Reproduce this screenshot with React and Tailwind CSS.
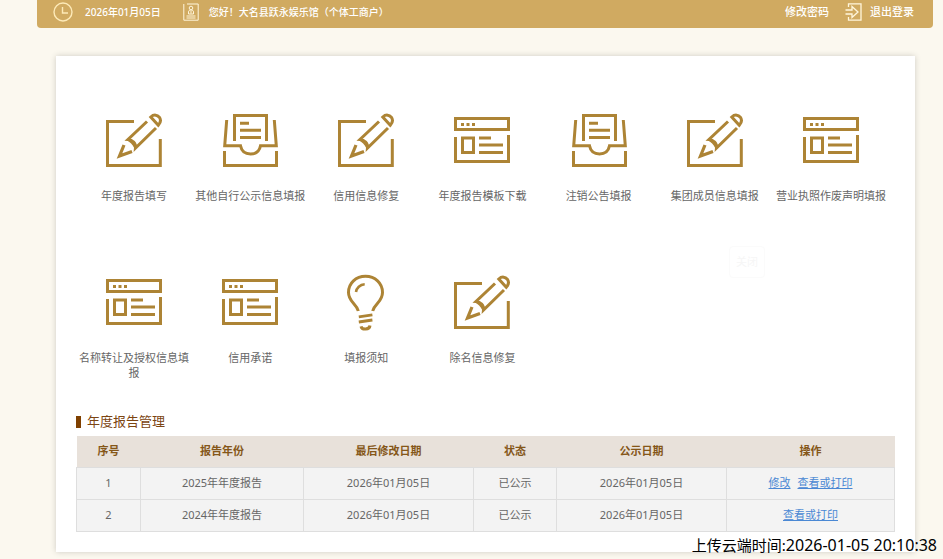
import React from "react";

const menu = [
  { label: "年度报告填写", icon: EditIcon },
  { label: "其他自行公示信息填报", icon: InboxIcon },
  { label: "信用信息修复", icon: EditIcon },
  { label: "年度报告模板下载", icon: WindowIcon },
  { label: "注销公告填报", icon: InboxIcon },
  { label: "集团成员信息填报", icon: EditIcon },
  { label: "营业执照作废声明填报", icon: WindowIcon },
  { label: "名称转让及授权信息填报", icon: WindowIcon },
  { label: "信用承诺", icon: WindowIcon },
  { label: "填报须知", icon: BulbIcon },
  { label: "除名信息修复", icon: EditIcon },
];

// widths are shares of the full table, the browser scales them together
const columns = [
  { title: "序号", width: "w-[64px]" },
  { title: "报告年份", width: "w-[163px]" },
  { title: "最后修改日期", width: "w-[170px]" },
  { title: "状态", width: "w-[83px]" },
  { title: "公示日期", width: "w-[170px]" },
  { title: "操作", width: "w-[168px]" },
];

const reports = [
  {
    id: 1,
    year: "2025年年度报告",
    modified: "2026年01月05日",
    status: "已公示",
    published: "2026年01月05日",
    actions: ["修改", "查看或打印"],
  },
  {
    id: 2,
    year: "2024年年度报告",
    modified: "2026年01月05日",
    status: "已公示",
    published: "2026年01月05日",
    actions: ["查看或打印"],
  },
];

function MenuSvg({ children }) {
  return (
    <svg
      viewBox="0 0 60 60"
      className="size-[60px] text-[#ad8435]"
      fill="none"
      stroke="currentColor"
      strokeWidth="3"
      aria-hidden="true"
    >
      {children}
    </svg>
  );
}

function EditIcon() {
  return (
    <MenuSvg>
      <path d="M30 11.5H3.5V55.5H56.3V29" />
      <path d="M43 11.5L24 29.5C28.5 29.8 32 33 31.5 38L52 18" />
      <path d="M23.5 29.5C26 30.5 30 34.5 31.5 38.5" strokeWidth="2" />
      <path d="M20 35L15.5 46L28 41.5" strokeWidth="3.2" />
      <path d="M46.8 7C50 4 53.5 5 55.3 7.2C57 9.5 56.8 12.5 54.3 15.2Z" />
    </MenuSvg>
  );
}

function InboxIcon() {
  return (
    <MenuSvg>
      <path d="M14.5 31V5.5H46.5V31" />
      <path d="M20 13.3H29M20 20.3H41M20 27.5H41" />
      <path d="M6.7 10L4.7 35.8H20.5C21.5 41 25 44 30.5 44C36 44 39.5 41 40.5 35.8H56.3L54.3 10" />
      <path d="M4.5 41V55.5H56.5V41" />
    </MenuSvg>
  );
}

function WindowIcon() {
  return (
    <MenuSvg>
      <path d="M3.5 8.5H56.5V19.5H3.5Z" />
      <path d="M9 14.5H12M14.5 14.5H17.5M20 14.5H23" />
      <path d="M3.5 27V51.5H56.5V25" />
      <path d="M10.5 28H21.5V42.5H10.5Z" />
      <path d="M27 28H39M27 35H51M27 42.5H51" />
    </MenuSvg>
  );
}

function BulbIcon() {
  return (
    <MenuSvg>
      <path d="M22.3 39C20.5 31.5 12.5 30 12.5 20.5C12.5 11 20 4.3 29.5 4.3C39 4.3 46.5 11 46.5 20.5C46.5 30 38.5 31.5 36.7 39" />
      <path d="M20 20C20.5 16 24 12.5 28.7 12.2" strokeWidth="2.6" />
      <path d="M22.8 44.8L36.4 42.8M22.8 50L36.4 48" strokeWidth="2.8" />
      <path d="M25 54.3C26 58.3 33.5 58 34 53.5" />
    </MenuSvg>
  );
}

function ClockIcon() {
  return (
    <svg viewBox="0 0 20 20" className="size-5 text-[#fdeab8]" fill="none" stroke="currentColor" strokeWidth="1.4" aria-hidden="true">
      <circle cx="10" cy="10" r="9" />
      <path d="M9.5 5V11H15" />
    </svg>
  );
}

function BadgeIcon() {
  return (
    <svg viewBox="0 0 16 18" className="h-[18px] w-4 text-[#fff6dc]" fill="none" stroke="currentColor" aria-hidden="true">
      <path d="M4 1H15.2V17.2H.8V1" />
      <circle cx="8" cy="5" r="1.8" />
      <path d="M5.5 11V9C5.5 7.6 6.5 7 8 7S10.5 7.6 10.5 9V11ZM8 8V10.5M3.5 13H12.5M3.5 15H12.5" />
    </svg>
  );
}

function LogoutIcon() {
  return (
    <svg viewBox="0 0 17 18" className="h-[18px] w-[17px] text-[#fff6dc]" fill="none" stroke="currentColor" strokeWidth="1.3" aria-hidden="true">
      <path d="M3.5 4V.8H16V17.2H3.5V14" />
      <path d="M.5 7H7V3.5L13 9L7 14.5V11H.5" />
    </svg>
  );
}

function TopBar() {
  return (
    <header className="flex h-7 items-center justify-between rounded-b bg-[#d0aa61] pr-[19px] pb-1 pl-4 text-[10px] font-medium text-white">
      <div className="flex items-center">
        <ClockIcon />
        <span className="ml-3">2026年01月05日</span>
        <span className="ml-[22px] flex items-center gap-[10px]">
          <BadgeIcon />
          您好！大名县跃永娱乐馆（个体工商户）
        </span>
      </div>
      <nav className="flex items-center gap-4 text-[11px]">
        <a href="#password">修改密码</a>
        <a href="#logout" className="flex items-center gap-2">
          <LogoutIcon />
          退出登录
        </a>
      </nav>
    </header>
  );
}

function ReportTable() {
  return (
    <table className="w-full table-fixed border-collapse text-center text-[11px] text-[#666]">
      <thead>
        <tr className="h-[31px] bg-[#e8e1da] text-[#855719]">
          {columns.map((col) => (
            <th key={col.title} className={col.width}>
              {col.title}
            </th>
          ))}
        </tr>
      </thead>
      <tbody>
        {reports.map((row) => (
          <tr key={row.id} className="h-8 bg-[#f3f3f3]">
            <td className="border border-[#dedede]">{row.id}</td>
            <td className="border border-[#dedede]">{row.year}</td>
            <td className="border border-[#dedede]">{row.modified}</td>
            <td className="border border-[#dedede]">{row.status}</td>
            <td className="border border-[#dedede]">{row.published}</td>
            <td className="border border-[#dedede]">
              <div className="flex justify-center gap-[7px]">
                {row.actions.map((action) => (
                  <a key={action} href="#report" className="text-[#4a88d4] underline">
                    {action}
                  </a>
                ))}
              </div>
            </td>
          </tr>
        ))}
      </tbody>
    </table>
  );
}

export default function App() {
  return (
    <div className="relative min-h-screen bg-[#fbf8ef] pr-[10px] pb-[7px] pl-[37px] font-['Noto_Sans','Noto_Sans_CJK_SC',sans-serif]">
      <TopBar />

      <main className="relative mr-[18px] ml-[19px] mt-7 bg-white pr-[21px] pl-5 pt-[54px] pb-5 shadow-[0_0_6px_rgba(0,0,0,0.18)]">
        <nav className="mr-[5px] grid grid-cols-7">
          {menu.map(({ label, icon: Icon }) => (
            <a
              key={label}
              href="#menu"
              className="flex h-[162px] flex-col items-center gap-[18px] text-center text-[11px] leading-[15px] text-[#666]"
            >
              <Icon />
              <span>{label}</span>
            </a>
          ))}
        </nav>

        {/* dialog button, almost faded out */}
        <button className="absolute top-[190px] right-[150px] h-8 w-9 rounded border border-[#fbfbfb] text-[11px] text-[#f6f6f6]">
          关闭
        </button>

        <h2 className="mt-[-26px] flex h-7 items-center gap-[6px] text-[13px] text-[#7c4512]">
          <span className="h-3 w-[5px] bg-[#7f4000]" />
          年度报告管理
        </h2>
        <ReportTable />
      </main>

      <p className="absolute right-[6px] bottom-[2px] text-[15px] leading-6 text-black">
        上传云端时间:<time className="text-base">2026-01-05 20:10:38</time>
      </p>
    </div>
  );
}
